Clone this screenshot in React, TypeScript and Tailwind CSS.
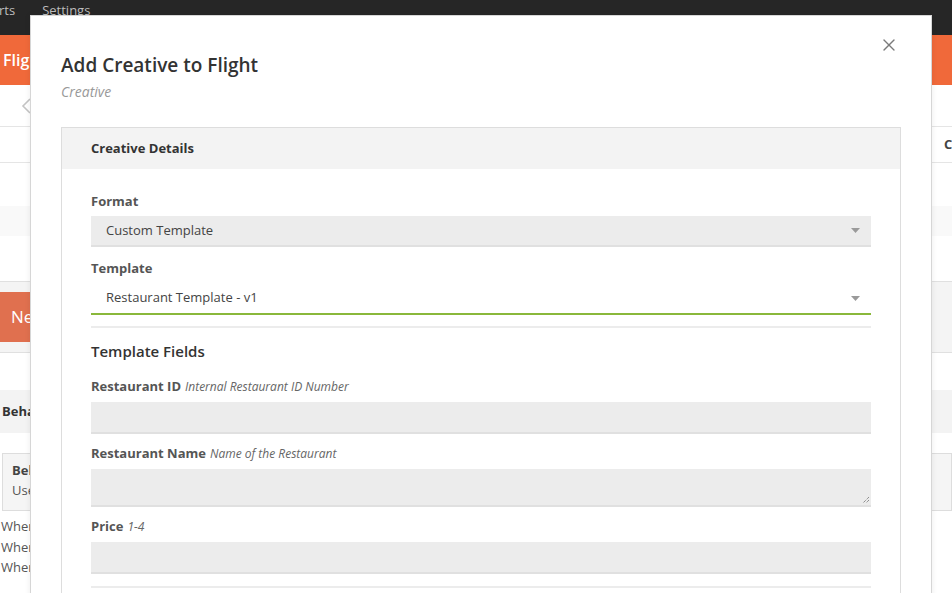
import { X } from 'lucide-react'

const font = { fontFamily: '"Open Sans", "Liberation Sans", sans-serif' }

function Caret() {
  return (
    <svg width="9" height="5" viewBox="0 0 9 5" className="shrink-0">
      <path d="M0 0 L9 0 L4.5 5 Z" fill="#9a9a9a" />
    </svg>
  )
}

function Label({ title, hint }: { title: string; hint?: string }) {
  return (
    <div className="text-[13px] leading-[18px] text-[#555]">
      <span className="font-bold">{title}</span>
      {hint && <span className="ml-1 text-[12px] italic text-[#666]">{hint}</span>}
    </div>
  )
}

function Background() {
  return (
    <div className="w-[952px] h-[593px] overflow-hidden bg-white text-[#444]" style={font}>
      <div className="h-[35px] bg-[#262626] flex gap-[27px] pt-[1px] text-[13px] text-[#bdbdbd]">
        <span className="-ml-[1px]">rts</span>
        <span>Settings</span>
      </div>
      <div className="h-[50px] bg-[#f0693a] flex items-center pl-[3px] text-[16px] font-semibold text-white">
        Flights
      </div>
      <div className="h-[42px] border-b border-[#e5e5e5] flex items-center pl-[21px]">
        <svg width="10" height="16" viewBox="0 0 10 16">
          <path d="M9 1 L2 8 L9 15" fill="none" stroke="#c4c4c4" strokeWidth="1.6" />
        </svg>
      </div>
      <div className="h-[36px] border-b border-[#e5e5e5] flex items-center justify-end text-[13px] font-bold text-[#444]">
        <span className="w-[8px] overflow-hidden">C</span>
      </div>
      <div className="mt-[43px] h-[30px] bg-[#f9f9f9]" />
      <div className="mt-[45px] h-[72px] border-y border-[#e0e0e0] bg-[#f4f4f4] flex items-center">
        <div className="h-[50px] w-[120px] bg-[#e0704f] flex items-center pl-[11px] text-[17px] text-white">New</div>
      </div>
      <div className="mt-[37px] h-[43px] bg-[#f3f3f3] flex items-center pl-[2px] text-[13px] font-bold text-[#333]">
        Behavior
      </div>
      <div className="mt-[20px] ml-[2px] h-[58px] border border-[#ddd] bg-[#f5f5f5] px-[9px] pt-[6px] text-[13px] leading-[20px]">
        <div className="font-bold text-[#444]">Behavior</div>
        <div className="text-[#555]">Use</div>
      </div>
      <div className="mt-[5px] pl-[1px] text-[13px] leading-[20.5px] text-[#555]">
        <div>When</div>
        <div>When</div>
        <div>When</div>
      </div>
    </div>
  )
}

export default function App() {
  return (
    <div className="relative w-[952px] h-[593px] overflow-hidden" style={font}>
      <Background />
      <div className="absolute left-[30px] top-[15px] w-[902px] h-[600px] bg-white border border-[#d6d6d6] shadow-[0_0_6px_rgba(0,0,0,0.08)]">
        <button className="absolute right-[32px] top-[19px] text-[#7a7a7a]">
          <X size={20} strokeWidth={1.6} />
        </button>
        <div className="px-[30px] pt-[35px]">
          <h1 className="text-[19px] leading-[28px] font-semibold text-[#333]">Add Creative to Flight</h1>
          <div className="mt-[3px] text-[14px] leading-[20px] italic text-[#999]">Creative</div>

          <div className="mt-[25px] border border-[#ddd]">
            <div className="h-[41px] bg-[#f3f3f3] flex items-center pl-[29px] text-[13px] font-bold text-[#333]">
              Creative Details
            </div>
            <div className="px-[29px] pt-[23px]">
              <Label title="Format" />
              <div className="mt-[6px] h-[31px] bg-[#ececec] border-b-2 border-[#e0e0e0] flex items-center justify-between pl-[15px] pr-[11px] text-[13px] text-[#444]">
                <span>Custom Template</span>
                <Caret />
              </div>

              <div className="mt-[12px]">
                <Label title="Template" />
              </div>
              <div className="mt-[6px] h-[32px] bg-white border-b-2 border-[#8ab83b] flex items-center justify-between pl-[15px] pr-[11px] text-[13px] text-[#444]">
                <span>Restaurant Template - v1</span>
                <Caret />
              </div>

              <div className="mt-[11px] h-[2px] bg-[#ececec]" />

              <h2 className="mt-[12px] text-[15px] leading-[22px] font-semibold text-[#333]">Template Fields</h2>

              <div className="mt-[15px]">
                <Label title="Restaurant ID" hint="Internal Restaurant ID Number" />
              </div>
              <div className="mt-[6px] h-[32px] bg-[#ececec] border-b-2 border-[#e0e0e0]" />

              <div className="mt-[10px]">
                <Label title="Restaurant Name" hint="Name of the Restaurant" />
              </div>
              <div className="relative mt-[6px] h-[38px] bg-[#ececec] border-b-2 border-[#e0e0e0]">
                <svg width="8" height="8" viewBox="0 0 8 8" className="absolute right-[1px] bottom-[1px]">
                  <path d="M7 1 L1 7 M7 4 L4 7" stroke="#666" strokeWidth="1" strokeDasharray="1 1" />
                </svg>
              </div>

              <div className="mt-[10px]">
                <Label title="Price" hint="1-4" />
              </div>
              <div className="mt-[6px] h-[32px] bg-[#ececec] border-b-2 border-[#e0e0e0]" />

              <div className="mt-[12px] h-[2px] bg-[#ececec]" />
              <div className="h-[40px]" />
            </div>
          </div>
        </div>
      </div>
    </div>
  )
}
